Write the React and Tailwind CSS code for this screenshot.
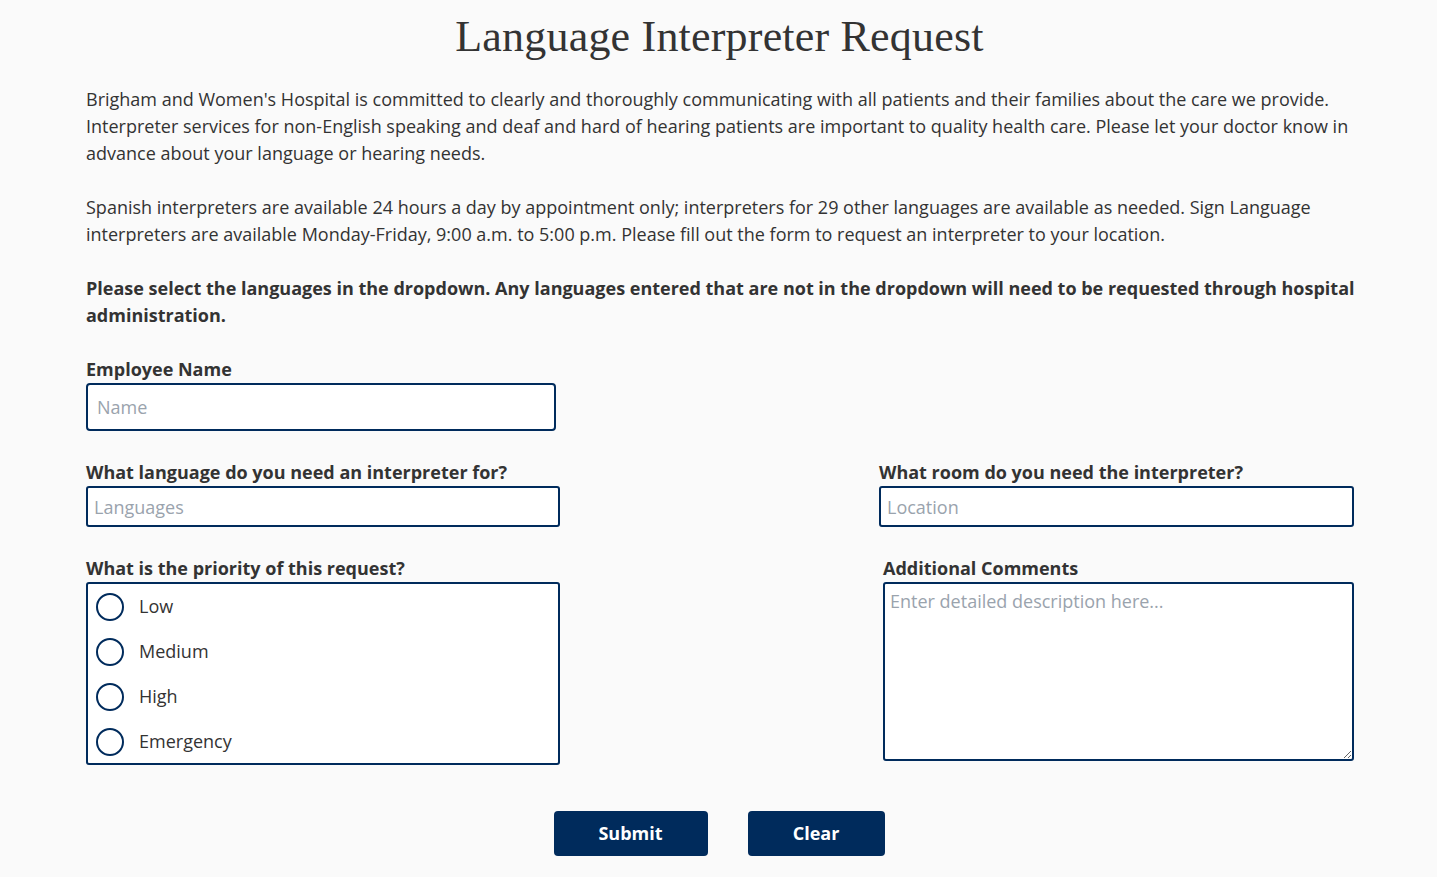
import React from "react";

const navy = "border-[#002b5c]";

function Radio({ label }) {
  return (
    <label className="flex items-center h-[45px] pl-[8px]">
      <span className="w-[28px] h-[28px] rounded-full border-2 border-[#002b5c] bg-white shrink-0" />
      <span className="ml-[15px] text-[18px] text-[#333]">{label}</span>
    </label>
  );
}

export default function App() {
  return (
    <div className="min-h-screen bg-[#fafafa] text-[#333]" style={{ fontFamily: '"Open Sans", sans-serif' }}>
      <div className="pl-[86px] pr-[74px]">
        <h1
          className="text-center text-[44px] leading-[48px] pt-[13px] pr-[10px] text-[#333] tracking-[0.2px]"
          style={{ fontFamily: '"Liberation Serif", serif', fontWeight: 400 }}
        >
          Language Interpreter Request
        </h1>
        <div className="text-[18px] leading-[27px] mt-[25px]">
          <p>
            Brigham and Women's Hospital is committed to clearly and thoroughly communicating with all patients and their families about the care we provide. Interpreter services for non-English speaking and deaf and hard of hearing patients are important to quality health care. Please let your doctor know in advance about your language or hearing needs.
          </p>
          <p className="mt-[27px]">
            Spanish interpreters are available 24 hours a day by appointment only; interpreters for 29 other languages are available as needed. Sign Language interpreters are available Monday-Friday, 9:00 a.m. to 5:00 p.m. Please fill out the form to request an interpreter to your location.
          </p>
          <p className="mt-[27px] font-bold">
            Please select the languages in the dropdown. Any languages entered that are not in the dropdown will need to be requested through hospital administration.
          </p>
        </div>

        <div className="mt-[27px]">
          <div className="text-[18px] leading-[27px] font-bold">Employee Name</div>
          <input
            placeholder="Name"
            className={`block w-[470px] h-[48px] border-2 ${navy} rounded-[4px] bg-white px-[9px] text-[18px] placeholder:text-[#9aa3ad] outline-none`}
          />
        </div>

        <div className="flex justify-between mt-[28px] pr-[9px]">
          <div className="w-[474px]">
            <div className="text-[18px] leading-[27px] font-bold">What language do you need an interpreter for?</div>
            <input
              placeholder="Languages"
              className={`block w-[474px] h-[41px] border-2 ${navy} rounded-[3px] bg-white px-[6px] text-[18px] placeholder:text-[#9aa3ad] outline-none`}
            />
          </div>
          <div className="w-[475px]">
            <div className="text-[18px] leading-[27px] font-bold">What room do you need the interpreter?</div>
            <input
              placeholder="Location"
              className={`block w-[475px] h-[41px] border-2 ${navy} rounded-[3px] bg-white px-[6px] text-[18px] placeholder:text-[#9aa3ad] outline-none`}
            />
          </div>
        </div>

        <div className="flex justify-between mt-[28px] pr-[9px]">
          <div className="w-[474px]">
            <div className="text-[18px] leading-[27px] font-bold">What is the priority of this request?</div>
            <div className={`w-[474px] h-[183px] border-2 ${navy} rounded-[3px] bg-white`}>
              <Radio label="Low" />
              <Radio label="Medium" />
              <Radio label="High" />
              <Radio label="Emergency" />
            </div>
          </div>
          <div className="w-[471px]">
            <div className="text-[18px] leading-[27px] font-bold">Additional Comments</div>
            <textarea
              placeholder="Enter detailed description here..."
              className={`block w-[471px] h-[179px] border-2 ${navy} rounded-[3px] bg-white px-[5px] py-[4px] text-[18px] leading-[26px] placeholder:text-[#9aa3ad] outline-none`}
            />
          </div>
        </div>

        <div className="flex justify-center gap-[40px] mt-[46px] pb-[21px] pr-[11px]">
          <button className="w-[154px] h-[45px] rounded-[4px] bg-[#002b5c] text-white font-bold text-[18px]">Submit</button>
          <button className="w-[137px] h-[45px] rounded-[4px] bg-[#002b5c] text-white font-bold text-[18px]">Clear</button>
        </div>
      </div>
    </div>
  );
}
